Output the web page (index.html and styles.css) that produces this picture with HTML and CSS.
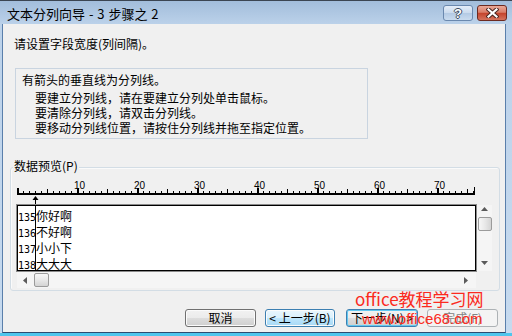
FILE: index.html
```html
<!DOCTYPE html>
<html lang="zh-CN">
<head>
<meta charset="utf-8">
<title>文本分列向导</title>
<link rel="stylesheet" href="styles.css">
</head>
<body>
<div class="window">
  <div class="titlebar">
    <span class="title">文本分列向导 - 3 步骤之 2</span>
    <div class="tb-buttons">
      <div class="tb-btn help"><span class="help-glyph">?</span></div>
      <div class="tb-btn close">
        <svg width="13" height="10" viewBox="0 0 13 10">
          <path d="M2.5 1.5 L10.5 8.5 M10.5 1.5 L2.5 8.5" stroke="#4a2620" stroke-width="4.2" stroke-linecap="square" fill="none"/>
          <path d="M2.5 1.5 L10.5 8.5 M10.5 1.5 L2.5 8.5" stroke="#ffffff" stroke-width="2.2" stroke-linecap="square" fill="none"/>
        </svg>
      </div>
    </div>
  </div>
  <div class="client">
    <p class="prompt">请设置字段宽度(列间隔)。</p>
    <div class="info">
      <p class="info-head">有箭头的垂直线为分列线。</p>
      <p class="info-line">要建立分列线，请在要建立分列处单击鼠标。</p>
      <p class="info-line">要清除分列线，请双击分列线。</p>
      <p class="info-line">要移动分列线位置，请按住分列线并拖至指定位置。</p>
    </div>
    <div class="group">
      <span class="group-label">数据预览(<u>P</u>)</span>
      <svg class="ruler" width="480" height="27" viewBox="0 0 480 27">
        <defs>
          <pattern id="tick" x="6" y="0" width="6" height="27" patternUnits="userSpaceOnUse">
            <rect x="0" y="13" width="1" height="2" fill="#000"/>
          </pattern>
        </defs>
        <rect x="6" y="0" width="458" height="27" fill="url(#tick)"/>
        <rect x="6" y="15" width="458" height="2" fill="#000"/>
        <g fill="#000">
          <rect x="36" y="11" width="1" height="4"/>
          <rect x="96" y="11" width="1" height="4"/>
          <rect x="156" y="11" width="1" height="4"/>
          <rect x="216" y="11" width="1" height="4"/>
          <rect x="276" y="11" width="1" height="4"/>
          <rect x="336" y="11" width="1" height="4"/>
          <rect x="396" y="11" width="1" height="4"/>
          <rect x="456" y="11" width="1" height="4"/>
          <rect x="6" y="10" width="2" height="5"/>
          <rect x="66" y="10" width="2" height="5"/>
          <rect x="126" y="10" width="2" height="5"/>
          <rect x="186" y="10" width="2" height="5"/>
          <rect x="246" y="10" width="2" height="5"/>
          <rect x="306" y="10" width="2" height="5"/>
          <rect x="366" y="10" width="2" height="5"/>
          <rect x="426" y="10" width="2" height="5"/>
          <rect x="463" y="9" width="1" height="8"/>
        </g>
        <g class="ruler-num" text-anchor="middle">
          <text x="68.5" y="11">10</text>
          <text x="128.5" y="11">20</text>
          <text x="188.5" y="11">30</text>
          <text x="248.5" y="11">40</text>
          <text x="308.5" y="11">50</text>
          <text x="368.5" y="11">60</text>
          <text x="428.5" y="11">70</text>
        </g>
        <path d="M24.5 18 L21.5 22 L27.5 22 Z" fill="#000"/>
        <rect x="24" y="20" width="1" height="7" fill="#000"/>
      </svg>
      <div class="preview">
        <div class="data">
          <div class="row"><span class="num">135</span>你好啊</div>
          <div class="row"><span class="num">136</span>不好啊</div>
          <div class="row"><span class="num">137</span>小小下</div>
          <div class="row"><span class="num">138</span>大大大</div>
          <div class="split-line"></div>
        </div>
        <div class="vscroll">
          <svg class="arrow-up" width="7" height="4" viewBox="0 0 7 4"><path d="M3.5 0 L7 4 L0 4 Z" fill="#5a5a5a"/></svg>
          <div class="thumb vthumb"></div>
          <svg class="arrow-down" width="7" height="4" viewBox="0 0 7 4"><path d="M0 0 L7 0 L3.5 4 Z" fill="#5a5a5a"/></svg>
        </div>
      </div>
      <div class="hscroll">
        <svg class="arrow-left" width="4" height="7" viewBox="0 0 4 7"><path d="M4 0 L4 7 L0 3.5 Z" fill="#5a5a5a"/></svg>
        <div class="thumb hthumb"></div>
        <svg class="arrow-right" width="4" height="7" viewBox="0 0 4 7"><path d="M0 0 L4 3.5 L0 7 Z" fill="#5a5a5a"/></svg>
      </div>
    </div>
    <div class="buttons">
      <button class="btn cancel">取消</button>
      <button class="btn prev hover">&lt; 上一步(<u>B</u>)</button>
      <button class="btn next default">下一步(<u>N</u>) &gt;</button>
      <button class="btn finish disabled">完成(<u>F</u>)</button>
    </div>
  </div>
  <div class="watermark wm1">office教程学习网</div>
  <div class="watermark wm2">www.office68.com</div>
</div>
</body>
</html>
```

FILE: styles.css
```css
* {
  box-sizing: border-box;
}

html, body {
  margin: 0;
  padding: 0;
}

body {
  width: 512px;
  height: 336px;
  overflow: hidden;
  background: #c4d8ee;
  font-family: "Noto Sans CJK SC", "Liberation Sans", sans-serif;
  font-size: 12px;
  color: #000;
}

p {
  margin: 0;
}

.window {
  position: relative;
  width: 512px;
  height: 336px;
  display: flex;
  flex-direction: column;
  background: linear-gradient(#a2bddb 0, #bcd2ea 24px, #c6daef 100%);
  border-top: 1px solid #3b4552;
  border-bottom: 3px solid #4fc5ec;
}

.titlebar {
  height: 23px;
  flex: none;
  display: flex;
  align-items: flex-start;
  justify-content: space-between;
  padding: 4px 5px 0 7px;
}

.title {
  margin-top: 1px;
  font-size: 13px;
  line-height: 16px;
  color: #000;
  word-spacing: 1px;
}

.tb-buttons {
  display: flex;
}

.tb-btn {
  width: 30px;
  height: 16px;
  border-radius: 3px;
  display: flex;
  align-items: center;
  justify-content: center;
}

.help {
  margin-right: 4px;
  border: 1px solid #6a88ae;
  background: linear-gradient(#e4edf8, #cbdbee 48%, #b4cae4 52%, #c9dbef);
}

.help-glyph {
  font-family: "Liberation Sans", sans-serif;
  font-weight: bold;
  font-size: 13px;
  line-height: 13px;
  color: #fff;
  text-shadow: 1px 0 0 #3c4a5e, -1px 0 0 #3c4a5e, 0 1px 0 #3c4a5e, 0 -1px 0 #3c4a5e;
}

.close {
  border: 1px solid #6d2a20;
  background: linear-gradient(#eaa897, #d97d68 45%, #c5442c 52%, #d4735d);
}

.client {
  margin-left: 2px;
  width: 504px;
  height: 309px;
  flex: none;
  display: flex;
  flex-direction: column;
  background: #f0f0f0;
  border-left: 1px solid #5a7fab;
  border-right: 1px solid #5a7fab;
  border-bottom: 1px solid #2c4a70;
}

.prompt {
  margin: 12px 0 0 11px;
  line-height: 16px;
}

.info {
  margin: 16px 0 0 12px;
  width: 353px;
  height: 71px;
  border: 1px solid #c9d4e0;
  padding: 3px 0 0 6px;
  line-height: 15px;
}

.info-head {
  margin-bottom: 3px;
}

.info-line {
  padding-left: 13px;
}

.group {
  position: relative;
  margin: 28px 0 0 7px;
  width: 490px;
  height: 124px;
  border: 1px solid #d3dde5;
  border-radius: 3px;
  box-shadow: inset 1px 1px 0 #fafafa;
}

.group-label {
  position: absolute;
  left: 2px;
  top: -9px;
  padding: 0 1px;
  background: #f0f0f0;
  line-height: 14px;
}

u {
  text-decoration: none;
}

.ruler {
  display: block;
  margin-top: 10px;
}

.ruler-num {
  font-family: "Liberation Sans", sans-serif;
  font-size: 10px;
  fill: #000;
}

.preview {
  display: flex;
  margin-left: 6px;
  gap: 1px;
}

.data {
  position: relative;
  width: 459px;
  height: 66px;
  background: #fff;
  border: 1px solid #000;
  box-shadow: 0 0 0 1px #8a8a8a;
  padding-top: 2px;
  overflow: hidden;
}

.row {
  height: 16px;
  line-height: 16px;
  white-space: nowrap;
}

.num {
  font-family: "DejaVu Sans Mono", "Liberation Mono", monospace;
  font-size: 10px;
}

.split-line {
  position: absolute;
  left: 17px;
  top: 0;
  bottom: 0;
  width: 1px;
  background: #000;
}

.vscroll {
  width: 15px;
  height: 66px;
  display: flex;
  flex-direction: column;
  align-items: center;
  background: #f5f5f5;
  padding-top: 2px;
}

.arrow-down {
  margin-top: auto;
  margin-bottom: 6px;
}

.thumb {
  border: 1px solid #9b9b9b;
  border-radius: 2px;
  background: linear-gradient(90deg, #f7f7f7, #e6e6e6 50%, #d6d6d6);
}

.vthumb {
  margin-top: 6px;
  width: 14px;
  height: 14px;
  background: linear-gradient(90deg, #f7f7f7, #e8e8e8 50%, #d4d4d4);
}

.hscroll {
  margin: 1px 0 0 6px;
  width: 459px;
  height: 16px;
  display: flex;
  align-items: center;
  background: #f5f5f5;
}

.arrow-left {
  margin-left: 6px;
}

.hthumb {
  margin-left: 7px;
  width: 15px;
  height: 14px;
  background: linear-gradient(#f7f7f7, #e8e8e8 50%, #d4d4d4);
}

.arrow-right {
  margin-left: auto;
  margin-right: 8px;
}

.buttons {
  margin-top: 18px;
  display: flex;
  justify-content: flex-end;
  gap: 9px;
  padding-right: 7px;
}

.btn {
  height: 18px;
  padding: 0;
  margin: 0;
  font-family: "Noto Sans CJK SC", "Liberation Sans", sans-serif;
  font-size: 12px;
  line-height: 16px;
  color: #000;
  text-align: center;
  border: 1px solid #707070;
  border-radius: 3px;
  background: linear-gradient(#f2f2f2, #ebebeb 50%, #dddddd 50%, #cfcfcf);
  box-shadow: inset 0 0 0 1px #fbfbfb;
}

.cancel {
  width: 71px;
}

.prev {
  width: 70px;
}

.next {
  width: 72px;
  margin-left: 2px;
}

.finish {
  width: 71px;
}

.btn.hover {
  border-color: #3c7fb1;
  background: linear-gradient(#eaf6fd, #d9f0fc 50%, #bee6fd 50%, #a7d9f5);
}

.btn.default {
  border-color: #3c7fb1;
  box-shadow: inset 0 0 0 1px #62c8f0;
}

.btn.disabled {
  border-color: #adb2b5;
  background: #f4f4f4;
  box-shadow: none;
  color: #838383;
}

.watermark {
  position: absolute;
  color: #fb2a20;
  white-space: nowrap;
}

.wm1 {
  left: 355px;
  top: 288px;
  font-size: 17px;
  line-height: 20px;
}

.wm2 {
  left: 362px;
  top: 310px;
  font-family: "Liberation Sans", sans-serif;
  font-size: 15px;
  line-height: 16px;
}
```
